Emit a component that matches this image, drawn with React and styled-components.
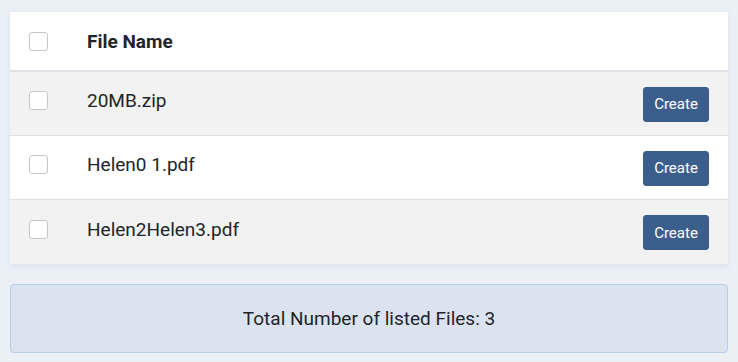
import React from "react";
import styled, { createGlobalStyle } from "styled-components";

const Global = createGlobalStyle`
  html, body { margin: 0; padding: 0; background: #ebf0f7; }
  body { font-family: Roboto, "Liberation Sans", sans-serif; color: #212529; }
`;

const Page = styled.div`
  padding: 12px 10px 10px 10px;
  display: flex;
  flex-direction: column;
  gap: 20px;
`;

const Card = styled.div`
  background: #fff;
  box-shadow: 0 2px 6px rgba(40, 60, 90, 0.08);
  display: flex;
  flex-direction: column;
`;

const Row = styled.div`
  display: grid;
  grid-template-columns: 77px 1fr auto;
  align-items: center;
  height: ${(p) => (p.$header ? "58px" : p.$last ? "64px" : "63px")};
  background: ${(p) => (p.$striped ? "#f2f2f2" : "#fff")};
  border-bottom: ${(p) =>
    p.$header ? "2px solid #dee2e6" : p.$last ? "none" : "1px solid #dee2e6"};
  padding-right: 19px;
`;

const Check = styled.span`
  box-sizing: border-box;
  width: 19px;
  height: 19px;
  margin-left: 19px;
  border: 1px solid #c6c6c6;
  border-radius: 3px;
  background: #fff;
  margin-bottom: ${(p) => (p.$header ? "0" : "6px")};
`;

const Name = styled.span`
  font-size: 19px;
  font-weight: ${(p) => (p.$bold ? 700 : 400)};
  line-height: 1;
  padding-bottom: ${(p) => (p.$bold ? "0" : "6px")};
`;

const Button = styled.button`
  font-family: Roboto, "Liberation Sans", sans-serif;
  font-size: 15px;
  color: #fff;
  background: #3b5f8c;
  border: 1px solid #3b5f8c;
  border-radius: 3px;
  width: 66px;
  height: 35px;
  padding: 0;
  margin-top: 1px;
`;

const Footer = styled.div`
  height: 67px;
  background: #dce3f0;
  border: 1px solid #b8cde6;
  border-radius: 4px;
  display: flex;
  align-items: center;
  justify-content: center;
  font-size: 19px;
`;

const files = ["20MB.zip", "Helen0 1.pdf", "Helen2Helen3.pdf"];

export default function App() {
  return (
    <>
      <Global />
      <Page>
        <Card>
          <Row $header>
            <Check $header />
            <Name $bold>File Name</Name>
            <span />
          </Row>
          {files.map((f, i) => (
            <Row key={f} $striped={i % 2 === 0} $last={i === files.length - 1}>
              <Check />
              <Name>{f}</Name>
              <Button>Create</Button>
            </Row>
          ))}
        </Card>
        <Footer>Total Number of listed Files: 3</Footer>
      </Page>
    </>
  );
}
